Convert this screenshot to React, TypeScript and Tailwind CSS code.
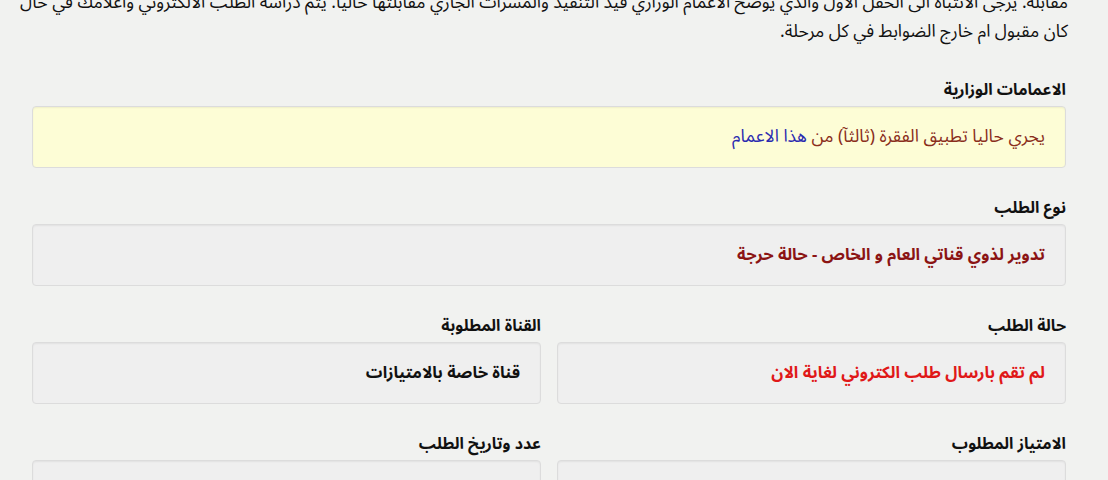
import React from 'react';

const boxClass =
  'rounded-[4px] border border-[#dcdcdc] shadow-[inset_0_1px_2px_rgba(0,0,0,0.06)] h-[62px] flex items-center px-5';
const labelClass = 'text-[16px] font-bold text-[#111] mb-[4px] leading-[24px]';

const Field = ({ label, children }: { label: string; children?: React.ReactNode }) => (
  <div>
    <div className={labelClass}>{label}</div>
    <div className={`${boxClass} bg-[#efefef] text-[16.5px]`}>{children}</div>
  </div>
);

export default function App() {
  return (
    <div
      dir="rtl"
      className="h-[480px] overflow-hidden bg-[#f1f2f0] text-[#111]"
      style={{ fontFamily: '"Noto Sans Arabic", "DejaVu Sans", sans-serif' }}
    >
      {/* intro paragraph, scrolled partly out of view */}
      <div className="pr-[40px] mt-[-12px] text-[17.5px] leading-[29px] text-[#111]">
        <p className="whitespace-nowrap">
          مقابلة. يرجى الانتباه الى الحقل الاول والذي يوضح الاعمام الوزاري قيد التنفيذ والمشرات الجاري مقابلتها حاليا. يتم
          دراسة الطلب الالكتروني واعلامك في حال
        </p>
        <p>كان مقبول ام خارج الضوابط في كل مرحلة.</p>
      </div>

      <div className="pr-[42px] pl-[32px] mt-[32px] flex flex-col gap-[28px]">
        <div>
          <div className={labelClass}>الاعمامات الوزارية</div>
          <div className={`${boxClass} bg-[#fdfdd6] text-[17.5px]`}>
            <span className="text-[#8a2e1c]">
              يجري حاليا تطبيق الفقرة (ثالثآ) من <span className="text-[#2b2bb0]">هذا الاعمام</span>
            </span>
          </div>
        </div>

        <Field label="نوع الطلب">
          <span className="font-bold text-[#8b1414]">تدوير لذوي قناتي العام و الخاص - حالة حرجة</span>
        </Field>

        <div className="grid grid-cols-2 gap-4">
          <Field label="حالة الطلب">
            <span className="font-bold text-[#e01818]">لم تقم بارسال طلب الكتروني لغاية الان</span>
          </Field>
          <Field label="القناة المطلوبة">
            <span className="font-bold text-[#111]">قناة خاصة بالامتيازات</span>
          </Field>
        </div>

        <div className="grid grid-cols-2 gap-4">
          <Field label="الامتياز المطلوب" />
          <Field label="عدد وتاريخ الطلب" />
        </div>
      </div>
    </div>
  );
}
